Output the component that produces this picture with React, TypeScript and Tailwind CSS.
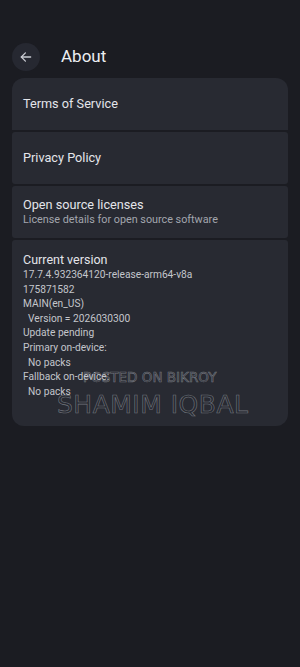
import React from 'react'

const versionLines = [
    '17.7.4.932364120-release-arm64-v8a',
    '175871582',
    'MAIN(en_US)',
    '\u00a0\u00a0Version = 2026030300',
    'Update pending',
    'Primary on-device:',
    '\u00a0\u00a0No packs',
    'Fallback on-device:',
    '\u00a0\u00a0No packs',
]

function Row({ title, sub, top }: { title: string; sub?: string; top?: boolean }) {
    return (
        <div className={`bg-[#282a32] px-[11px] h-[52px] flex flex-col justify-center ${top ? 'rounded-t-[12px]' : 'rounded-[3px]'}`}>
            <p className='text-[12.7px] leading-[16px] text-[#e4e5ea]'>{title}</p>
            {sub && <p className='text-[10.8px] leading-[14px] text-[#a3a6ae]'>{sub}</p>}
        </div>
    )
}

export default function App() {
    return (
        <div className="min-h-[667px] w-[300px] bg-[#1b1c22] font-['Roboto',sans-serif] pt-[43px]">
            <div className='flex items-center px-[12px] h-[28px]'>
                <div className='w-[28px] h-[28px] rounded-full bg-[#262831] flex items-center justify-center'>
                    <svg width="14" height="14" viewBox="0 0 24 24" fill="none" stroke="#c9cbd2" strokeWidth="2.2" strokeLinecap="round" strokeLinejoin="round">
                        <path d="M20 12H4" />
                        <path d="M11 5l-7 7 7 7" />
                    </svg>
                </div>
                <h1 className='ml-[21px] text-[17px] text-[#eceef2]'>About</h1>
            </div>

            <div className='mx-[12px] mt-[7px] flex flex-col gap-[2px]'>
                <Row title='Terms of Service' top />
                <Row title='Privacy Policy' />
                <Row title='Open source licenses' sub='License details for open source software' />
                <div className='relative bg-[#282a32] rounded-t-[3px] rounded-b-[12px] px-[11px] pt-[12px] h-[186px]'>
                    <p className='text-[12.5px] leading-[16px] text-[#e4e5ea]'>Current version</p>
                    {versionLines.map((line, i) => (
                        <p key={i} className='text-[10.2px] leading-[14.6px] text-[#c4c6cc] whitespace-pre'>{line}</p>
                    ))}
                    {/* watermark over the picture */}
                    <div className="absolute left-[0px] top-[128px] w-full pointer-events-none font-['DejaVu_Sans',sans-serif] text-transparent [-webkit-text-stroke:0.6px_rgba(190,192,200,0.5)]">
                        <p className='pl-[71px] text-[13.5px] leading-[18px]'>POSTED ON BIKROY</p>
                        <p className='pl-[45px] mt-[4px] text-[25px] leading-[30px] tracking-[0.5px]'>SHAMIM IQBAL</p>
                    </div>
                </div>
            </div>
        </div>
    )
}
